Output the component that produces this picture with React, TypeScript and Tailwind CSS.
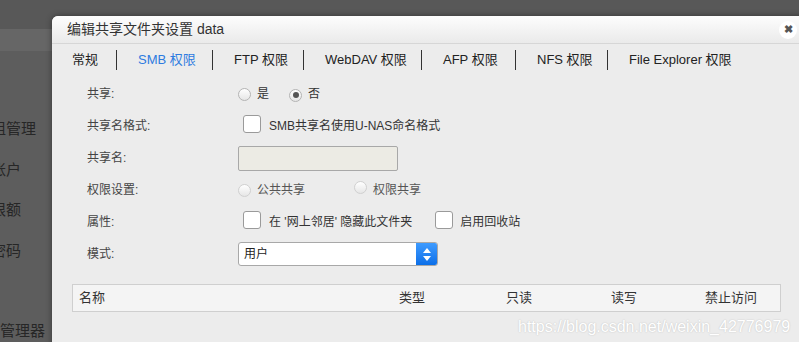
import React from 'react';

const FONT = '"Liberation Sans", "Noto Sans CJK SC", sans-serif';

const tabs = ['常规', 'SMB 权限', 'FTP 权限', 'WebDAV 权限', 'AFP 权限', 'NFS 权限', 'File Explorer 权限'];
// box width of each tab, so separators land where the screenshot has them
const tabWidths = [44, 96, 91, 118, 94, 92, 140];

function Radio({ checked = false, disabled = false }: { checked?: boolean; disabled?: boolean }) {
  return (
    <span
      className={`inline-flex w-[13px] h-[13px] rounded-full border items-center justify-center bg-gradient-to-b from-white to-[#e6e6e6] ${
        disabled ? 'border-[#d0d0d0]' : 'border-[#b4b4b4]'
      }`}
    >
      {checked && <span className="w-[6px] h-[6px] rounded-full bg-[#555]" />}
    </span>
  );
}

function Checkbox() {
  return <span className="inline-block w-[18px] h-[18px] rounded-[3px] border border-[#9a9a9a] bg-white" />;
}

function Row({ label, children }: { label: string; children: React.ReactNode }) {
  return (
    <div className="flex items-center h-[32px]">
      <div className="w-[151px] text-[12px] text-[#444]">{label}</div>
      <div className="flex items-center text-[12px] text-[#333]">{children}</div>
    </div>
  );
}

export default function App() {
  return (
    <div className="relative w-[799px] h-[342px] overflow-hidden bg-[#5d5d5d]" style={{ fontFamily: FONT }}>
      {/* page behind the dialog */}
      <div className="h-[29px] bg-[#585858]" />
      <div className="h-[22px] bg-[#666]" />
      <div className="flex flex-col text-[15px] text-[#262626]">
        <div className="mt-[67px] -ml-[9px]">组管理</div>
        <div className="mt-[18px] -ml-[9px]">账户</div>
        <div className="mt-[18px] -ml-[9px]">限额</div>
        <div className="mt-[18px] -ml-[9px]">密码</div>
        <div className="mt-[58px] ml-[0px]">管理器</div>
      </div>

      {/* dialog */}
      <div className="absolute left-[52px] top-[16px] w-[760px] h-[340px] bg-[#ececec] rounded-tl-[6px] shadow-[0_0_6px_rgba(0,0,0,0.4)]">
        <div className="h-[28px] flex items-center pl-[15px] rounded-tl-[6px] bg-gradient-to-b from-[#fdfdfd] to-[#eaeaea] border-b border-[#d6d6d6]">
          <span className="text-[14px] text-[#333]">编辑共享文件夹设置 data</span>
          <span className="ml-auto mr-[15px] w-[18px] h-[18px] rounded-full bg-white flex items-center justify-center text-[11px] text-[#555] font-bold">
            ✖
          </span>
        </div>

        {/* tabs */}
        <div className="flex items-center h-[32px] pl-[20px]">
          {tabs.map((t, i) => (
            <div key={t} className="flex items-center shrink-0" style={{ width: tabWidths[i] }}>
              {i > 0 && <span className="w-px h-[20px] bg-[#333] mr-[21px]" />}
              <span className={`text-[13px] ${i === 1 ? 'text-[#2d7be0]' : 'text-[#222]'}`}>{t}</span>
            </div>
          ))}
        </div>

        {/* form */}
        <div className="pl-[35px] pt-[2px]">
          <Row label="共享:">
            <Radio />
            <span className="ml-[6px]">是</span>
            <span className="ml-[20px]"><Radio checked /></span>
            <span className="ml-[6px]">否</span>
          </Row>
          <Row label="共享名格式:">
            <span className="ml-[5px]"><Checkbox /></span>
            <span className="ml-[8px]">SMB共享名使用U-NAS命名格式</span>
          </Row>
          <Row label="共享名:">
            <span className="w-[160px] h-[25px] bg-[#ecebe4] border border-[#a8a8a8] rounded-[2px]" />
          </Row>
          <Row label="权限设置:">
            <Radio disabled />
            <span className="ml-[6px] text-[#555]">公共共享</span>
            <span className="ml-[49px]"><Radio disabled /></span>
            <span className="ml-[6px] text-[#555]">权限共享</span>
          </Row>
          <Row label="属性:">
            <span className="ml-[5px]"><Checkbox /></span>
            <span className="ml-[8px]">在 '网上邻居' 隐藏此文件夹</span>
            <span className="ml-[23px]"><Checkbox /></span>
            <span className="ml-[7px]">启用回收站</span>
          </Row>
          <Row label="模式:">
            <div className="flex w-[200px] h-[24px] bg-white border border-[#a8a8a8] rounded-[3px] overflow-hidden">
              <span className="flex-1 flex items-center pl-[5px] text-[12px] text-[#222]">用户</span>
              <span className="w-[21px] bg-gradient-to-b from-[#3d9bff] to-[#0a6fe8] flex flex-col items-center justify-center gap-[3px]">
                <svg width="8" height="5" viewBox="0 0 8 5"><path d="M0 5 L4 0 L8 5 Z" fill="#fff" /></svg>
                <svg width="8" height="5" viewBox="0 0 8 5"><path d="M0 0 L4 5 L8 0 Z" fill="#fff" /></svg>
              </span>
            </div>
          </Row>
        </div>

        {/* table header */}
        <div className="ml-[20px] mt-[14px] w-[709px] h-[28px] flex items-center bg-[#f4f4f4] border border-[#cfcfcf] text-[13px] text-[#333]">
          <span className="w-[326px] pl-[6px]">名称</span>
          <span className="w-[107px]">类型</span>
          <span className="w-[105px]">只读</span>
          <span className="w-[94px]">读写</span>
          <span>禁止访问</span>
        </div>
      </div>

      {/* watermark */}
      <div className="absolute left-[518px] top-[315px] text-[16px] text-white [text-shadow:0_0_1.5px_#b8b8b8]">
        https://blog.csdn.net/weixin_42776979
      </div>
    </div>
  );
}
